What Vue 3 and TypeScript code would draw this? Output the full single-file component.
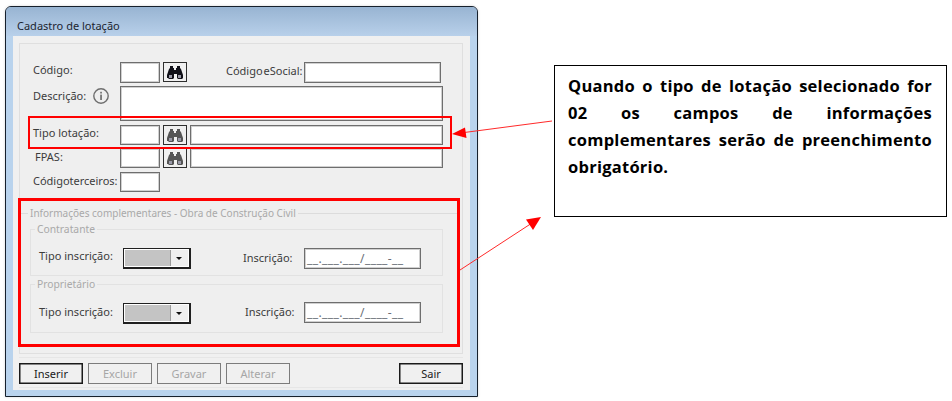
<template>
  <div class="page">
    <div class="window">
      <div class="titlebar">Cadastro de lotação</div>
      <div class="client">
        <div class="panel">
          <div class="row first">
            <span class="label">Código:</span>
            <span class="input small"></span>
            <button class="search"><Binoculars /></button>
            <span class="label esocial">Código eSocial:</span>
            <span class="input esocial-input"></span>
          </div>
          <div class="row desc">
            <span class="label desc-label">
              Descrição:
              <svg class="info" width="18" height="18" viewBox="0 0 18 18">
                <circle cx="9" cy="9" r="7.2" fill="none" stroke="#6f6f6f" stroke-width="1.4" />
                <rect x="8.2" y="7.6" width="1.7" height="5.4" fill="#6f6f6f" />
                <rect x="8.2" y="4.8" width="1.7" height="1.7" fill="#6f6f6f" />
              </svg>
            </span>
            <span class="input wide tall"></span>
          </div>
          <div class="row tipo">
            <span class="label">Tipo lotação:</span>
            <span class="input small"></span>
            <button class="search"><Binoculars muted /></button>
            <span class="input long"></span>
          </div>
          <div class="row fpas">
            <span class="label fpas-label">FPAS:</span>
            <span class="input small"></span>
            <button class="search"><Binoculars muted /></button>
            <span class="input long"></span>
          </div>
          <div class="row terceiros">
            <span class="label tight">Código terceiros:</span>
            <span class="input small"></span>
          </div>

          <fieldset class="outer">
            <legend>Informações complementares - Obra de Construção Civil</legend>
            <fieldset v-for="group in groups" :key="group.name" class="inner" :class="group.cls">
              <legend>{{ group.name }}</legend>
              <div class="inner-row">
                <span class="label inner-label">Tipo inscrição:</span>
                <span class="combo">
                  <span class="combo-value"></span>
                  <span class="combo-arrow"></span>
                </span>
                <span class="label insc-label">Inscrição:</span>
                <span class="input mask">__.___.___/____-__</span>
              </div>
            </fieldset>
          </fieldset>
        </div>

        <div class="actions">
          <button
            v-for="b in buttons"
            :key="b.text"
            class="action"
            :class="{ active: b.active }"
          >{{ b.text }}</button>
          <button class="action active exit">Sair</button>
        </div>
      </div>
    </div>

    <div class="callout">
      Quando o tipo de lotação selecionado for 02 os campos de informações complementares serão de preenchimento obrigatório.
    </div>

    <!-- marcações por cima do print -->
    <div class="mark mark-tipo"></div>
    <div class="mark mark-info"></div>
    <svg class="arrows" width="952" height="401" viewBox="0 0 952 401">
      <line x1="552" y1="121" x2="462" y2="132.8" stroke="#ff2a2a" stroke-width="1" />
      <polygon points="452,134 465,127.5 466.5,138" fill="#f00" />
      <line x1="460" y1="270" x2="532" y2="223" stroke="#ff2a2a" stroke-width="1" />
      <polygon points="541,217 526,219.5 533,230" fill="#f00" />
    </svg>
  </div>
</template>

<script setup lang="ts">
import { defineComponent, h } from 'vue'

const Binoculars = defineComponent({
  props: { muted: Boolean },
  setup(props) {
    const fill = props.muted ? '#555555' : '#101018'
    return () =>
      h('svg', { width: 16, height: 13, viewBox: '0 0 16 13' }, [
        h('path', {
          fill,
          d: 'M3 0h3v2h1v2h2V2h1V0h3v2l1 1 2 6v3l-1 1h-4l-1-1V8H7v4l-1 1H2l-1-1-1-0V9l2-6 1-1z',
        }),
        h('rect', { x: 2, y: 9, width: 3, height: 3, fill: '#9a9aa8' }),
        h('rect', { x: 11, y: 9, width: 3, height: 3, fill: '#9a9aa8' }),
      ])
  },
})

const groups = [
  { name: 'Contratante', cls: 'contratante' },
  { name: 'Proprietário', cls: 'proprietario' },
]

const buttons = [
  { text: 'Inserir', active: true },
  { text: 'Excluir', active: false },
  { text: 'Gravar', active: false },
  { text: 'Alterar', active: false },
]
</script>

<style>
html,
body {
  background: #ffffff;
}
</style>

<style scoped>
.page {
  position: relative;
  width: 952px;
  height: 401px;
  overflow: hidden;
  display: flex;
  align-items: flex-start;
  font-family: 'Noto Sans', sans-serif;
  font-size: 11px;
  color: #3c3c3c;
}

.window {
  box-sizing: border-box;
  width: 473px;
  height: 391px;
  margin: 6px 0 0 5px;
  padding: 0 7px 5px;
  border: 1px solid #16202c;
  border-radius: 6px 6px 0 0;
  background: #b9d3ed;
  box-shadow: 0 0 3px #d8d8d8;
  flex-shrink: 0;
}

.titlebar {
  height: 29px;
  margin: 0 -7px;
  padding: 11px 11px 0;
  box-sizing: border-box;
  border-radius: 5px 5px 0 0;
  background: linear-gradient(#98b4d2, #b8d0ea);
  color: #1c2530;
  font-size: 11px;
  line-height: 15px;
}

.client {
  height: 354px;
  padding: 7px 7px 0 6px;
  box-sizing: border-box;
  background: #f0f0f0;
}

.panel {
  box-sizing: border-box;
  height: 311px;
  padding-top: 18px;
  border: 1px solid #dfdfdf;
  background: #efefef;
}

.row {
  display: flex;
  margin-left: 13px;
  height: 20px;
}

.first {
  height: 21px;
}

.desc {
  height: 35px;
  margin-top: 3px;
}

.tipo {
  margin-top: 4px;
}

.fpas {
  margin-top: 3px;
}

.terceiros {
  margin-top: 4px;
}

.label {
  width: 87px;
  flex-shrink: 0;
  line-height: 15px;
  white-space: nowrap;
}

.esocial {
  width: 78px;
  margin-left: 39px;
  padding-top: 1px;
  word-spacing: -2px;
}

.desc-label {
  display: flex;
  align-items: flex-start;
  gap: 6px;
  padding-top: 2px;
}

.info {
  margin-top: -1px;
}

.fpas-label {
  padding-left: 2px;
  padding-top: 1px;
  width: 85px;
}

.tight {
  word-spacing: -3px;
  padding-top: 1px;
}

.input {
  box-sizing: border-box;
  display: block;
  background: #ffffff;
  border: 1px solid #6e6e6e;
  box-shadow: inset 0 0 0 1px #d0d0d0;
}

.small {
  width: 40px;
}

.esocial-input {
  width: 137px;
}

.wide {
  width: 323px;
}

.tall {
  height: 35px;
}

.long {
  width: 253px;
  margin-left: 3px;
}

.search {
  box-sizing: border-box;
  width: 24px;
  height: 20px;
  margin: 0 0 0 3px;
  padding: 0;
  display: flex;
  align-items: center;
  justify-content: center;
  border: 1px solid #2e2e2e;
  background: #f0f0f0;
}

.outer {
  box-sizing: border-box;
  width: 438px;
  height: 140px;
  margin: 13px 0 0 0;
  padding: 0 0 0 9px;
  border: 1px solid #dcdcdc;
  border-bottom: 0;
  min-width: 0;
}

.outer legend,
.inner legend {
  height: 16px;
  line-height: 16px;
  padding: 0 2px;
  color: #a9a9a9;
  font-size: 10px;
  white-space: nowrap;
}

.outer > legend {
  margin-left: -2px;
}

.inner {
  box-sizing: border-box;
  width: 413px;
  margin: 0;
  padding: 11px 0 0 8px;
  border: 1px solid #e2e2e2;
  min-width: 0;
}

.inner legend {
  margin-left: -4px;
  font-size: 10.3px;
}

.contratante {
  height: 55px;
}

.proprietario {
  height: 57px;
}

.inner-row {
  display: flex;
  height: 21px;
}

.inner-label {
  width: 84px;
}

.combo {
  box-sizing: border-box;
  width: 68px;
  height: 21px;
  display: flex;
  border: 1px solid #202020;
  border-width: 1px 2px 2px 1px;
  background: #ffffff;
  padding: 1px;
}

.combo-value {
  flex: 1;
  background: #c4c4c4;
}

.combo-arrow {
  width: 17px;
  position: relative;
  background: #efefef;
  border-left: 1px solid #9b9b9b;
}

.combo-arrow::after {
  content: '';
  position: absolute;
  left: 5px;
  top: 7px;
  border: 3px solid transparent;
  border-top: 3px solid #111111;
  border-bottom: 0;
}

.insc-label {
  width: 61px;
  margin-left: 52px;
  padding-top: 2px;
}

.proprietario .insc-label {
  padding-left: 2px;
  width: 59px;
  padding-top: 1px;
}

.proprietario .inner-label {
  padding-top: 1px;
}

.proprietario .mask {
  margin-top: -1px;
}

.mask {
  width: 117px;
  height: 21px;
  padding: 2px 0 0 2px;
  font-size: 12px;
  line-height: 16px;
  letter-spacing: 0.4px;
  color: #6a6f78;
  white-space: nowrap;
  overflow: hidden;
}

.actions {
  display: flex;
  gap: 5px;
  margin-top: 3px;
  height: 31px;
  box-sizing: border-box;
  padding-top: 5px;
  border: 1px solid #e6e6e6;
  border-left: 0;
  border-right: 0;
}

.action {
  box-sizing: border-box;
  width: 64px;
  height: 21px;
  padding: 0;
  font-family: inherit;
  font-size: 11px;
  background: #f0f0f0;
  color: #a6a6a6;
  border: 1px solid #7c7c7c;
}

.action.active {
  color: #1a1a1a;
  border: 1px solid #1a1a1a;
  box-shadow: inset 0 0 0 0.5px #1a1a1a;
}

.exit {
  margin-left: auto;
}

.callout {
  box-sizing: border-box;
  width: 393px;
  height: 152px;
  margin: 65px 0 0 76px;
  padding: 6px 14px 0 13px;
  border: 1px solid #000000;
  background: #ffffff;
  font-family: 'Open Sans', sans-serif;
  font-size: 16.5px;
  font-weight: 700;
  letter-spacing: 0.25px;
  line-height: 27px;
  color: #000000;
  text-align: justify;
  flex-shrink: 0;
}

.mark {
  position: absolute;
  box-sizing: border-box;
  border: 2px solid #ff0000;
}

.mark-tipo {
  left: 28px;
  top: 116px;
  width: 424px;
  height: 33px;
}

.mark-info {
  left: 18px;
  top: 198px;
  width: 442px;
  height: 149px;
  border-width: 3px;
}

.arrows {
  position: absolute;
  left: 0;
  top: 0;
  pointer-events: none;
}
</style>
